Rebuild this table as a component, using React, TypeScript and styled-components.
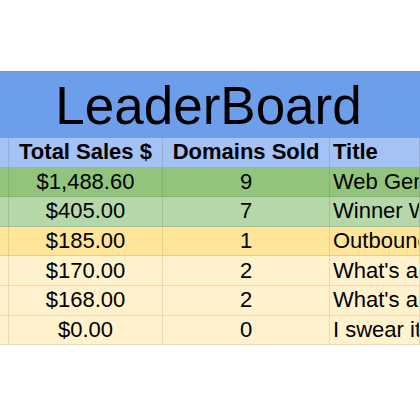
import React from 'react';
import styled, { createGlobalStyle } from 'styled-components';

const GlobalStyle = createGlobalStyle`
    html, body {
        margin: 0;
        padding: 0;
        background: #ffffff;
    }
    body {
        font-family: "Liberation Sans", Arial, sans-serif;
        color: #000000;
        overflow: hidden;
    }
`;

const Page = styled.div`
    width: 420px;
    height: 420px;
    padding-top: 71px;
    box-sizing: border-box;
    overflow: hidden;
`;

const Banner = styled.div`
    height: 67px;
    background-color: #6d9eeb;
    border-top: 1px solid rgba(0, 0, 0, 0.06);
    box-sizing: border-box;
    display: flex;
    align-items: center;
    justify-content: center;
    padding-right: 3px;
    font-size: 53px;
    line-height: 1;
`;

const Sheet = styled.div`
    display: grid;
    grid-template-columns: 9px 154px 167px 1fr;
    grid-auto-rows: 29.6px;
`;

const Cell = styled.div<{ $bg: string; $align?: 'left' | 'center'; $bold?: boolean }>`
    background-color: ${(p) => p.$bg};
    border-right: 1px solid rgba(0, 0, 0, 0.1);
    border-bottom: 1px solid rgba(0, 0, 0, 0.1);
    box-sizing: border-box;
    display: flex;
    align-items: center;
    justify-content: ${(p) => (p.$align === 'left' ? 'flex-start' : 'center')};
    padding-left: ${(p) => (p.$align === 'left' ? '3px' : '0')};
    font-size: 22px;
    font-weight: ${(p) => (p.$bold ? 700 : 400)};
    white-space: nowrap;
    overflow: hidden;
`;

const HEADER_BG = '#a4c2f4';

const rows = [
    { sales: '$1,488.60', sold: '9', title: 'Web Generation Leads', bg: '#93c47d' },
    { sales: '$405.00', sold: '7', title: 'Winner Websites', bg: '#b6d7a8' },
    { sales: '$185.00', sold: '1', title: 'Outbound Sales', bg: '#ffe599' },
    { sales: '$170.00', sold: '2', title: "What's a domain?", bg: '#fff2cc' },
    { sales: '$168.00', sold: '2', title: "What's a website?", bg: '#fff2cc' },
    { sales: '$0.00', sold: '0', title: 'I swear it works', bg: '#fff2cc' },
];

const App: React.FC = () => {
    return (
        <Page>
            <GlobalStyle />
            <Banner>LeaderBoard</Banner>
            <Sheet>
                <Cell $bg={HEADER_BG} />
                <Cell $bg={HEADER_BG} $bold>Total Sales $</Cell>
                <Cell $bg={HEADER_BG} $bold>Domains Sold</Cell>
                <Cell $bg={HEADER_BG} $bold $align="left">Title</Cell>
                {rows.map((r) => (
                    <React.Fragment key={r.title}>
                        <Cell $bg={r.bg} />
                        <Cell $bg={r.bg}>{r.sales}</Cell>
                        <Cell $bg={r.bg}>{r.sold}</Cell>
                        <Cell $bg={r.bg} $align="left">{r.title}</Cell>
                    </React.Fragment>
                ))}
            </Sheet>
        </Page>
    );
};

export default App;
